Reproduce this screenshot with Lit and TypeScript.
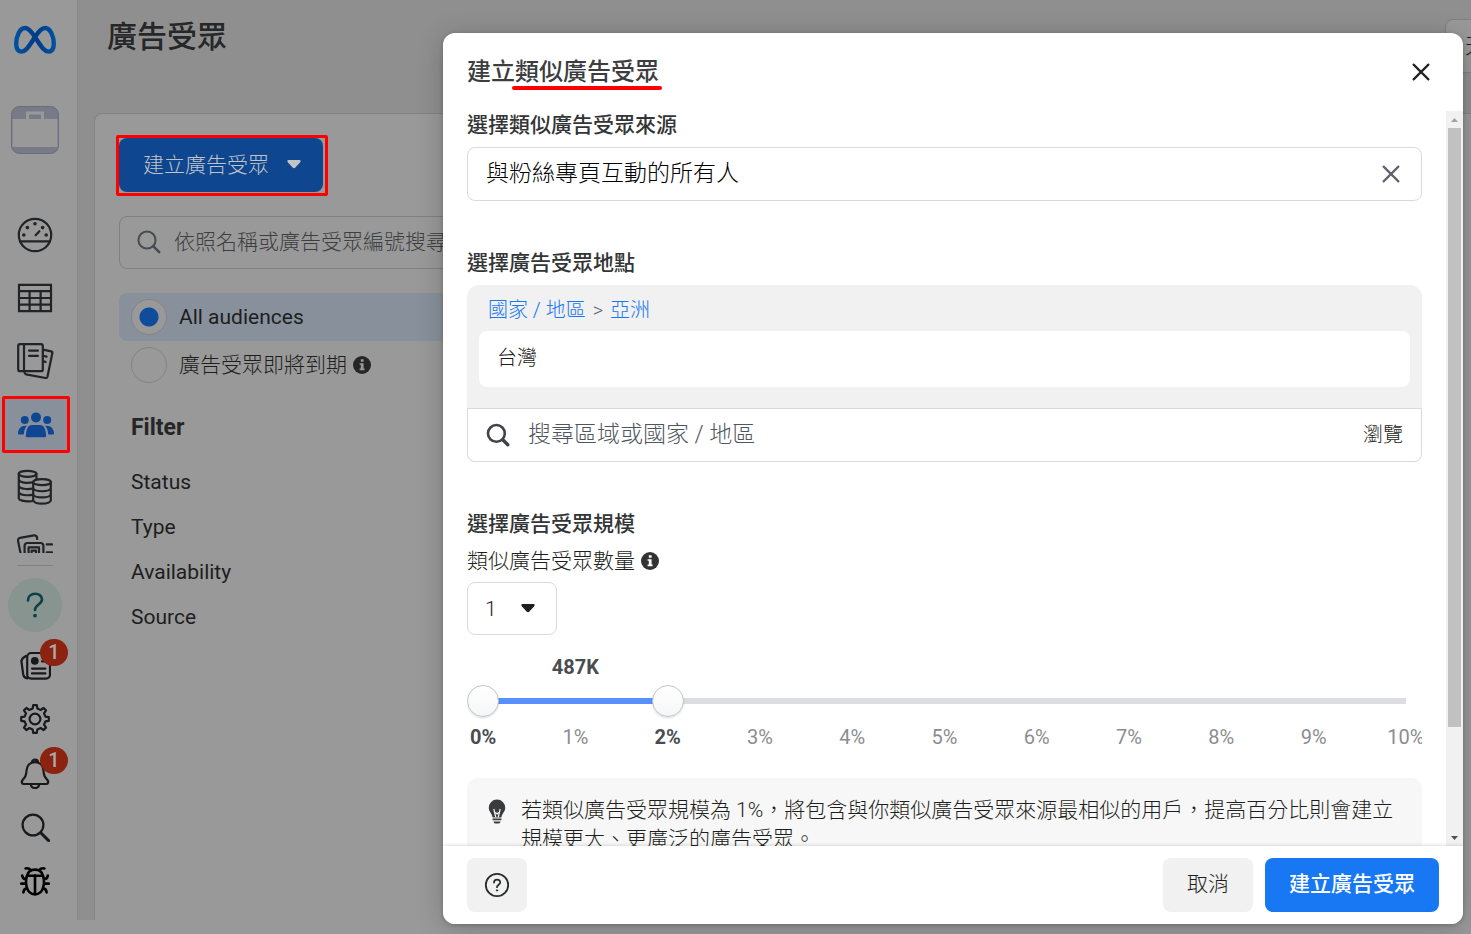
import { LitElement, html, css, svg } from "lit";
import { customElement, state } from "lit/decorators.js";
import { classMap } from "lit/directives/class-map.js";

const line = (body: unknown, w = 36, h = 36, sw = 2.2) => html`<svg class="ico" width=${w} height=${h} viewBox="0 0 ${w} ${h}" fill="none" stroke="currentColor" stroke-width=${sw} stroke-linecap="round" stroke-linejoin="round" aria-hidden="true">${body}</svg>`;

const gauge = line(svg`<circle cx="18" cy="18" r="16.2"/><path d="M3 24.4H33M18.6 18.2L22.4 14.2" /><g fill="currentColor" stroke="none"><circle cx="6.8" cy="18" r="1.8"/><circle cx="10.4" cy="10.6" r="1.8"/><circle cx="18" cy="6.8" r="1.8"/><circle cx="25.6" cy="10.6" r="1.8"/><circle cx="29.2" cy="18" r="1.8"/></g>`);
const table = line(svg`<path stroke-linejoin="miter" d="M2 4.8H34V31.2H2ZM2 11.2H34M2 18H34M2 24.6H34M12.6 11.2V31M23.6 11.2V31"/>`);
const books = line(svg`<rect x="1.2" y="2.2" width="24.6" height="27" rx="1.8"/><path d="M7 2.5V29M12 8.6H21M12 13.8H21M26 7.6L34.2 9.4Q35.6 9.8 35.3 11.2L30.4 35Q30 36.2 28.6 36L9 32.4Q7.6 32 7.4 30M27 14L29.6 14.6M26.5 19.4L28.6 19.8"/>`, 37, 38);
const people = html`<svg class="ico" width="36" height="28" viewBox="0 0 36 28" fill="currentColor" aria-hidden="true"><circle cx="18" cy="6.4" r="5"/><circle cx="6.8" cy="9" r="4"/><circle cx="29.2" cy="9" r="4"/><path d="M9 26.2C7.6 26.2 7.8 24.6 8 23.2C8.6 17 10.6 14 14 14H22C25.4 14 27.4 17 28 23.2C28.2 24.6 28.4 26.2 27 26.2ZM8.8 14.8C6.8 17.4 6 20 5.8 23.6H1C0 23.6 0 22.8 0 22C.4 17.4 3.4 14 8.8 14.8ZM27.2 14.8C29.2 17.4 30 20 30.2 23.6H35C36 23.6 36 22.8 36 22C35.6 17.4 32.6 14 27.2 14.8Z"/></svg>`;
const coins = line(svg`<ellipse cx="10.6" cy="4.8" rx="8.8" ry="3"/><path d="M1.8 4.8V29.4C2.2 31.2 7 32.6 12 32.4Q14.6 32.4 16 31.8M19.4 4.8V10M1.8 11.2C3.4 13.6 10 14.4 15.4 13.4M1.8 17.4C3.4 19.8 10 20.6 15.4 19.6M1.8 23.6C3.4 26 10 26.8 15.4 25.8"/><ellipse cx="25" cy="13.2" rx="8.8" ry="3"/><path d="M16.2 13.2V31.6C18 35.6 32 35.6 33.8 31.6V13.2M16.2 19.4C18 23.2 32 23.2 33.8 19.4M16.2 25.6C18 29.4 32 29.4 33.8 25.6"/>`, 36, 37);
const adCards = line(svg`<path d="M3.6 19.5L1 6.6Q.8 4.4 3 3.8L17 1.4Q19.4 1.2 20 3.4L20.2 5M7.6 19.5V11.6Q7.8 9 10.4 9H23.6Q26.2 9 26.4 11.6V19.5M11.6 19.5V13.4H22V19.5M14.6 19.5V16.6H19V19.5M29.8 10.4H35M29.8 18.4H35"/>`, 36, 19);
const news = line(svg`<rect x="7.2" y="3" width="22.8" height="25.6" rx="4"/><circle cx="14.8" cy="10.8" r="2.8" fill="currentColor"/><path d="M22 11.4H25M12 18.6H25.4M12 23.4H25.4M6 6Q1.8 8 1.4 11L3.2 24.4Q3.8 28 7.4 28.4"/>`, 31, 31);
const gear = line(svg`<circle cx="15" cy="15" r="5.4"/><path d="M12.6 4.6L13.2 1.2H16.8L17.4 4.6L20.6 6L23.6 4L26 6.4L24 9.4L25.4 12.6L28.8 13.2V16.8L25.4 17.4L24 20.6L26 23.6L23.6 26L20.6 24L17.4 25.4L16.8 28.8H13.2L12.6 25.4L9.4 24L6.4 26L4 23.6L6 20.6L4.6 17.4L1.2 16.8V13.2L4.6 12.6L6 9.4L4 6.4L6.4 4L9.4 6Z"/>`, 30, 30);
const bell = line(svg`<path d="M12 4.4C12 .6 18 .6 18 4.4M15 4.2C9.6 4.2 7 8 6.6 12C6.2 18 5 19.4 2.6 22C1 24 2 26 4 26H26C28 26 29 24 27.4 22C25 19.4 23.8 18 23.4 12C23 8 20.4 4.2 15 4.2ZM10.8 26.4C11.4 31.2 18.6 31.2 19.2 26.4"/>`, 30, 31);
const search = line(svg`<circle cx="12" cy="12" r="10.4"/><path stroke-width="3" d="M20 20L27.6 27.6"/>`, 29, 29);
const bug = html`<span class="bug">${line(svg`<path d="M15 9.4V28M7 9.8H23M7 9.8C5.2 15 5.4 28.4 15 28.4S24.8 15 23 9.8C21 1.6 9 1.6 7 9.8ZM11 4.4Q9.4 1.6 5.6 2.4M19 4.4Q20.6 1.6 24.4 2.4M6.2 13.4Q2.6 13 2.2 9.6M23.8 13.4Q27.4 13 27.8 9.6M5.8 17.6H1.2M24.2 17.6H28.8M6.8 22.4Q3.8 22.8 3.4 26.4M23.2 22.4Q26.2 22.8 26.6 26.4"/>`, 30, 30, 2.6)}</span>`;
const cross = line(svg`<path d="M1.6 1.6L16.4 16.4M16.4 1.6L1.6 16.4"/>`, 18, 18, 2.2);
const info = html`<svg class="info" width="18" height="18" viewBox="0 0 18 18" role="img" aria-label="info"><circle cx="9" cy="9" r="9" fill="currentColor"/><path class="cut" d="M7.8 3.2H10.6V5.8H7.8ZM6.6 7.2H10.6V12.6H11.6V14.2H6.6V12.6H7.8V8.8H6.6Z"/></svg>`;

@customElement("app-root")
export class AppRoot extends LitElement {
  @state() private low = 0;
  @state() private high = 2;

  static styles = css`
    :host { display: block; height: 100vh; position: relative; overflow: hidden; background: #999; color: #1d1e20;
      font-family: Roboto, "Noto Sans CJK TC", sans-serif; font-size: 21px; line-height: 28px; }
    * { box-sizing: border-box; }
    button, input, select { font: inherit; color: inherit; margin: 0; }
    button { border: 0; cursor: pointer; padding: 0; }
    h1, h2, h3, p, ul { margin: 0; padding: 0; }
    ul { list-style: none; }
    svg { display: block; flex: none; }
    .thin, .create, .find input, .src input, .crumb, .picked, .lookup input, .lookup button, .count, .pick select, .tip, .foot button, .bar button { font-weight: 300; }

    .app { display: flex; height: calc(100% - 14px); }
    .side { flex: none; width: 78px; padding: 25px 7px 0 0; border-right: 1px solid #868686; display: flex; flex-direction: column; align-items: center; color: #222325; }
    .nav { display: flex; flex-direction: column; align-items: center; padding-top: 49px; }
    .nav a, .tools a, .tools button { color: inherit; background: none; display: grid; place-items: center; position: relative; }
    .nav a { width: 64px; height: 63px; }
    .nav a.on { width: 68px; height: 57px; margin: 4px 0 3px 1px; background: #88919b; color: #0f4694; border: 3px solid #f00; border-radius: 2px; }
    .nav a.cut { height: 19px; margin-top: 15px; }
    .case { margin-top: 51px; }
    .tools { display: flex; flex-direction: column; align-items: center; color: #18191b; padding-top: 12px; }
    .rule { width: 36px; height: 1px; margin-bottom: 12px; background: #808080; }
    .tools button, .tools a { width: 54px; height: 54px; }
    .tools .help { background: #879490; color: #0b4048; border-radius: 50%; margin-bottom: 6px; }
    .bug { color: #000; }
    .badge { position: absolute; top: 1px; right: -6px; width: 28px; height: 27px; border-radius: 14px; background: #8c2210; color: #aaa; font-size: 20px; line-height: 27px; font-weight: 500; text-align: center; }

    .main { flex: 1; min-width: 0; background: #8f8f8f; padding: 19px 0 0 16px; display: flex; flex-direction: column; }
    .bar { display: flex; justify-content: space-between; height: 94px; }
    .bar h1 { font-size: 30px; line-height: 36px; font-weight: 500; padding-left: 13px; color: #262728; }
    .bar button { width: 120px; height: 54px; margin-right: -94px; border: 1px solid #808080; border-radius: 8px; background: #999; text-align: left; padding-left: 19px; flex: none; }
    .card { flex: 1; border: 1px solid #838383; border-right: 0; border-bottom: 0; border-radius: 8px 0 0 0; background: #999; padding: 21px 0 0 21px; }
    .ring { display: inline-block; border: 3px solid #f00; border-radius: 2px; vertical-align: top; }
    .create { display: flex; align-items: center; gap: 18px; width: 204px; height: 54px; margin: 0 2px 1px 0; padding: 0 0 1px 24px; border-radius: 8px; background: #0e4690; color: #c2c4c8; }
    .find { display: flex; align-items: center; gap: 12px; height: 53px; margin: 20px 24px 24px 3px; padding-left: 16px; border: 1px solid #808080; border-radius: 8px; color: #464b52; }
    .find input { flex: 1; border: 0; padding: 0 0 2px; background: none; outline: 0; }
    .find input::placeholder { color: #3c3e41; opacity: 1; }
    .opts { margin: 0 24px 0 3px; }
    .opt { display: flex; align-items: center; gap: 12px; height: 48px; padding-left: 12px; border-radius: 8px; }
    .opt.on { background: #88919b; }
    .opt input { appearance: none; width: 36px; height: 36px; border: 1px solid #838383; border-radius: 50%; background: #999; }
    .opt input:checked { background: radial-gradient(circle, #0f4d9c 9px, #999 10px); }
    .opt .info { margin-left: -6px; color: #262626; }
    .info .cut { fill: #999; }
    .filters { padding: 25px 0 0 15px; }
    .filters h2 { font-size: 23px; line-height: 28px; font-weight: 700; color: #252627; margin-bottom: 18px; }
    .filters li { height: 45px; line-height: 45px; }

    .dialog { position: absolute; top: 33px; right: 8px; bottom: 10px; left: 443px; display: flex; flex-direction: column; background: #fff; border-radius: 12px; box-shadow: 0 4px 28px rgba(0,0,0,.2), 0 1px 4px rgba(0,0,0,.2); overflow: hidden; }
    .head { display: flex; justify-content: space-between; align-items: center; height: 78px; padding: 0 33px 0 24px; flex: none; }
    .head h2 { font-size: 24px; line-height: 36px; font-weight: 500; color: #3c3d3e; }
    .head u { text-decoration: none; position: relative; }
    .head u::after { content: ""; position: absolute; left: -3px; right: -3px; bottom: -4px; height: 4px; border-radius: 2px; background: #f00; }
    .head button, .src button { background: none; color: #222; }
    .body { flex: 1; min-height: 0; display: flex; }
    .content { flex: 1; min-width: 0; padding: 0 24px; overflow: hidden; }
    .scroll { flex: none; width: 17px; background: #f1f1f1; display: flex; flex-direction: column; align-items: center; }
    .scroll span { height: 17px; display: grid; place-items: center; }
    .thumb { width: 13px; flex: 0 1 599px; background: #c1c1c1; }
    .scroll .down { margin-top: auto; }
    h3 { font-size: 21px; line-height: 28px; font-weight: 500; color: #333435; }
    .src { display: flex; align-items: center; height: 54px; margin: 8px 0 48px; padding: 0 21px 0 18px; border: 1px solid #d8dadd; border-radius: 8px; }
    .src input { flex: 1; border: 0; outline: 0; padding: 0; font-size: 23px; color: #000; }
    .src button { color: #5d646e; }
    .place { margin: 8px 0 48px; border-radius: 12px 12px 8px 8px; background: #f1f1f1; }
    .crumb { display: flex; gap: 7px; font-size: 20px; line-height: 28px; padding: 11px 21px 7px; color: #606770; }
    .crumb a { color: #1877f2; text-decoration: none; }
    .picked { margin: 0 12px 21px; height: 56px; line-height: 54px; padding-left: 18px; border-radius: 8px; background: #fff; font-size: 20px; }
    .lookup { display: flex; align-items: center; height: 54px; padding: 0 18px; border: 1px solid #d8dadd; border-radius: 0 0 8px 8px; background: #fff; }
    .lookup svg { color: #3f444b; }
    .lookup input { flex: 1; border: 0; outline: 0; padding: 0; margin-left: 18px; font-size: 23px; }
    .lookup input::placeholder { color: #50565e; opacity: 1; }
    .lookup button { background: none; font-size: 20px; }
    .count { display: flex; align-items: center; gap: 6px; margin: 9px 0 7px; }
    .dialog .info { color: #333; }
    .dialog .info .cut { fill: #fff; }
    .pick { display: inline-grid; align-items: center; width: 90px; height: 53px; }
    .pick > * { grid-area: 1 / 1; }
    .pick select { appearance: none; height: 53px; border: 1px solid #d8dadd; border-radius: 8px; background: #fff; padding: 0 17px; }
    .pick svg { justify-self: end; margin-right: 22px; pointer-events: none; }
    .range { overflow: hidden; margin-top: 18px; }
    .ticks { display: grid; grid-template-columns: repeat(11, 1fr); margin: 0 -30px; text-align: center; font-size: 20px; line-height: 28px; color: #8b8d8f; }
    .ticks b { font-weight: 700; color: #4b4c4e; }
    .ticks .reach { grid-column: 2; }
    .slider { display: grid; align-items: center; height: 40px; margin-bottom: 2px; }
    .slider > * { grid-area: 1 / 1; }
    .rail { height: 6px; margin: 0 16px; background: #dcdce3; }
    .fill { height: 6px; background: #5890ff; }
    .slider input { appearance: none; width: 100%; height: 32px; background: none; pointer-events: none; }
    .slider input::-webkit-slider-thumb { appearance: none; pointer-events: auto; width: 32px; height: 32px; border-radius: 50%; border: 1px solid #c3c5c8; background: linear-gradient(#fff, #f5f6f7); box-shadow: 0 1px 2px rgba(0,0,0,.15); }
    .tip { display: flex; gap: 15px; margin-top: 27px; padding: 18px 24px 24px 21px; border-radius: 10px; background: #f7f7f7; line-height: 29px; }
    .tip svg { margin-top: 3px; }
    .foot { display: flex; gap: 12px; align-items: center; height: 78px; padding: 0 24px; flex: none; box-shadow: 0 0 4px rgba(0,0,0,.2); position: relative; background: #fff; }
    .foot button { height: 54px; border-radius: 8px; background: #f1f1f1; padding: 0 24px 2px; }
    .foot .ask { width: 60px; padding: 0; display: grid; place-items: center; margin-right: auto; color: #2b2c2e; }
    .foot .go { background: #1877f2; color: #fff; font-weight: 500; }
  `;

  private onLow(e: Event) { this.low = Math.min(+(e.target as HTMLInputElement).value, this.high); }
  private onHigh(e: Event) { this.high = Math.max(+(e.target as HTMLInputElement).value, this.low); }

  render() {
    const nav = [["帳號總覽", gauge], ["行銷活動", table], ["廣告報告", books], ["廣告受眾", people], ["帳單", coins], ["廣告", adCards]] as const;
    return html`
      <div class="app">
        <nav class="side">
          <svg width="44" height="30" viewBox="0 0 44 30" fill="none" stroke-width="4.4" role="img" aria-label="Meta">
            <defs><linearGradient id="mg" x1="0" x2="1"><stop offset="0" stop-color="#0050a0"/><stop offset=".5" stop-color="#003b86"/><stop offset="1" stop-color="#004fa0"/></linearGradient></defs>
            <path stroke="url(#mg)" d="M22 12C17 4.4 14.6 3 12 3C6.6 3 3.2 11.4 3.2 18.8C3.2 23.6 5 26.6 8.6 26.6C12 26.6 14.4 24 22 12C26.6 4.8 29 3 32 3C37.4 3 40.8 11.4 40.8 18.8C40.8 23.6 39 26.6 35.4 26.6C32 26.6 29.6 24 22 12Z"/>
          </svg>
          <svg class="case" width="48" height="48" viewBox="0 0 48 48" role="img" aria-label="Business"><rect x=".5" y=".5" width="47" height="47" rx="8" fill="#777a87" stroke="#696c7c"/><path d="M1.5 13H46.5V41H1.5Z" fill="#999"/><path d="M16.5 13V7H31.5V13" fill="none" stroke="#999" stroke-width="3"/></svg>
          <div class="nav">
            ${nav.map(([name, icon], i) => html`<a href="#" aria-label=${name} class=${classMap({ on: i === 3, cut: i === 5 })}>${icon}</a>`)}
          </div>
          <div class="tools">
            <div class="rule"></div>
            <button class="help" aria-label="說明"><svg width="18" height="26" viewBox="0 0 18 26" fill="none" stroke="currentColor" stroke-width="2.6" stroke-linecap="round"><path d="M2 8.4C2 -.4 16 -.4 16 7.6C16 12.6 9 12.4 9 18"/><circle cx="9" cy="23.6" r="1.1" fill="currentColor" stroke-width="1.6"/></svg></button>
            <a href="#" aria-label="新聞">${news}<span class="badge">1</span></a>
            <button aria-label="設定">${gear}</button>
            <a href="#" aria-label="通知">${bell}<span class="badge">1</span></a>
            <button aria-label="搜尋">${search}</button>
            <button aria-label="回報問題">${bug}</button>
          </div>
        </nav>
        <main class="main">
          <header class="bar"><h1>廣告受眾</h1><button>天</button></header>
          <section class="card">
            <div class="ring"><button class="create">建立廣告受眾<svg width="14" height="9" viewBox="0 0 14 9" fill="currentColor"><path d="M1.6 0H12.4Q14.6 .4 13 2.4L8.4 7.6Q7 9 5.6 7.6L1 2.4Q-.6 .4 1.6 0Z"/></svg></button></div>
            <label class="find">
              <svg width="26" height="26" viewBox="0 0 26 26" fill="none" stroke="currentColor" stroke-width="2" stroke-linecap="round"><circle cx="11" cy="10" r="8.6"/><path stroke-width="2.6" d="M17.4 16.4L23.2 22.2"/></svg>
              <input type="text" aria-label="搜尋廣告受眾" placeholder="依照名稱或廣告受眾編號搜尋">
            </label>
            <div class="opts">
              <label class="opt on"><input type="radio" name="aud" checked>All audiences</label>
              <label class="opt"><input type="radio" name="aud"><span class="thin">廣告受眾即將到期</span> ${info}</label>
            </div>
            <div class="filters">
              <h2>Filter</h2>
              <ul><li>Status</li><li>Type</li><li>Availability</li><li>Source</li></ul>
            </div>
          </section>
        </main>
      </div>

      <div class="dialog" role="dialog" aria-labelledby="ttl">
        <header class="head"><h2 id="ttl">建立<u>類似廣告受眾</u></h2><button aria-label="關閉">${cross}</button></header>
        <div class="body">
          <div class="content">
            <h3><label for="src">選擇類似廣告受眾來源</label></h3>
            <div class="src"><input id="src" type="text" value="與粉絲專頁互動的所有人"><button aria-label="清除">${cross}</button></div>
            <h3><label for="loc">選擇廣告受眾地點</label></h3>
            <div class="place">
              <p class="crumb"><a href="#">國家 / 地區</a><span>&gt;</span><a href="#">亞洲</a></p>
              <div class="picked">台灣</div>
              <div class="lookup">
                <svg width="24" height="24" viewBox="0 0 24 24" fill="none" stroke="currentColor" stroke-width="2.6" stroke-linecap="round"><circle cx="10.4" cy="10.4" r="8.4"/><path stroke-width="3.4" d="M17 17L21.8 21.8"/></svg>
                <input id="loc" type="text" placeholder="搜尋區域或國家 / 地區"><button>瀏覽</button>
              </div>
            </div>
            <h3>選擇廣告受眾規模</h3>
            <div class="count"><label for="num">類似廣告受眾數量</label>${info}</div>
            <div class="pick">
              <select id="num"><option>1</option><option>2</option><option>3</option></select>
              <svg width="14" height="9" viewBox="0 0 14 9" fill="#1c1e21"><path d="M1.6 0H12.4Q14.6 .4 13 2.4L8.4 7.6Q7 9 5.6 7.6L1 2.4Q-.6 .4 1.6 0Z"/></svg>
            </div>
            <div class="range">
              <div class="ticks"><b class="reach">487K</b></div>
              <div class="slider">
                <div class="rail"><div class="fill" style="margin-left:${this.low * 10}%;width:${(this.high - this.low) * 10}%"></div></div>
                <input type="range" aria-label="最小百分比" min="0" max="10" .value=${String(this.low)} @input=${this.onLow}>
                <input type="range" aria-label="最大百分比" min="0" max="10" .value=${String(this.high)} @input=${this.onHigh}>
              </div>
              <div class="ticks">${Array.from({ length: 11 }, (_, i) => i === this.low || i === this.high ? html`<b>${i}%</b>` : html`<span>${i}%</span>`)}</div>
            </div>
            <div class="tip">
              <svg width="18" height="25" viewBox="0 0 18 25" fill="#3a3b3c"><path d="M9 .6A8.2 8.2 0 0 1 17.2 9C17.2 12.6 14 14.6 13.4 18.4H4.6C4 14.6 .8 12.6 .8 9A8.2 8.2 0 0 1 9 .6Z"/><path d="M5.8 10L7.8 18.4M12.2 10L10.2 18.4M7.4 13.4L9 15L10.6 13.4" stroke="#f7f7f7" stroke-width="1.2" fill="none"/><path d="M4.6 19.6H13.4V21.2H4.6ZM5.4 22.4H12.6Q12 24.6 10 24.6H8Q6 24.6 5.4 22.4Z"/></svg>
              <p>若類似廣告受眾規模為 1%，將包含與你類似廣告受眾來源最相似的用戶，提高百分比則會建立規模更大、更廣泛的廣告受眾。</p>
            </div>
          </div>
          <div class="scroll" aria-hidden="true">
            <span><svg width="7" height="4" viewBox="0 0 7 4" fill="#a3a3a3"><path d="M3.5 0L7 4H0Z"/></svg></span>
            <div class="thumb"></div>
            <span class="down"><svg width="7" height="4" viewBox="0 0 7 4" fill="#505050"><path d="M3.5 4L7 0H0Z"/></svg></span>
          </div>
        </div>
        <footer class="foot">
          <button class="ask" aria-label="說明"><svg width="26" height="26" viewBox="0 0 26 26" fill="none" stroke="currentColor" stroke-width="1.8" stroke-linecap="round"><circle cx="13" cy="13" r="11.2"/><path d="M10 10.6C10 6.6 16.2 6.6 16.2 10.4C16.2 12.8 13 12.8 13 15.2"/><circle cx="13" cy="18.4" r=".7" fill="currentColor" stroke-width="1"/></svg></button>
          <button>取消</button>
          <button class="go">建立廣告受眾</button>
        </footer>
      </div>
    `;
  }
}
